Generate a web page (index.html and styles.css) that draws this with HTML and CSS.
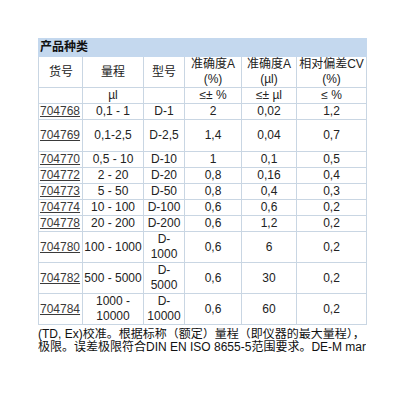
FILE: index.html
```html
<!DOCTYPE html>
<html lang="zh">
<head>
<meta charset="utf-8">
<link rel="stylesheet" href="styles.css">
</head>
<body>
<div class="page">
  <table class="spec">
    <colgroup>
      <col class="c1"><col class="c2"><col class="c3"><col class="c4"><col class="c5"><col class="c6">
    </colgroup>
    <tr class="title"><th colspan="6">产品种类</th></tr>
    <tr class="head">
      <td>货号</td><td>量程</td><td>型号</td><td>准确度A<br>(%)</td><td>准确度A<br>(µl)</td><td>相对偏差CV<br>(%)</td>
    </tr>
    <tr><td></td><td>µl</td><td></td><td>≤± %</td><td>≤± µl</td><td>≤ %</td></tr>
    <tr><td><a href="#">704768</a></td><td>0,1 - 1</td><td>D-1</td><td>2</td><td>0,02</td><td>1,2</td></tr>
    <tr class="tall"><td><a href="#">704769</a></td><td>0,1-2,5</td><td>D-2,5</td><td>1,4</td><td>0,04</td><td>0,7</td></tr>
    <tr><td><a href="#">704770</a></td><td>0,5 - 10</td><td>D-10</td><td>1</td><td>0,1</td><td>0,5</td></tr>
    <tr><td><a href="#">704772</a></td><td>2 - 20</td><td>D-20</td><td>0,8</td><td>0,16</td><td>0,4</td></tr>
    <tr><td><a href="#">704773</a></td><td>5 - 50</td><td>D-50</td><td>0,8</td><td>0,4</td><td>0,3</td></tr>
    <tr><td><a href="#">704774</a></td><td>10 - 100</td><td>D-100</td><td>0,6</td><td>0,6</td><td>0,2</td></tr>
    <tr><td><a href="#">704778</a></td><td>20 - 200</td><td>D-200</td><td>0,6</td><td>1,2</td><td>0,2</td></tr>
    <tr><td><a href="#">704780</a></td><td>100 - 1000</td><td>D-<br>1000</td><td>0,6</td><td>6</td><td>0,2</td></tr>
    <tr><td><a href="#">704782</a></td><td>500 - 5000</td><td>D-<br>5000</td><td>0,6</td><td>30</td><td>0,2</td></tr>
    <tr><td><a href="#">704784</a></td><td>1000 -<br>10000</td><td>D-<br>10000</td><td>0,6</td><td>60</td><td>0,2</td></tr>
  </table>
  <p class="note">(TD, Ex)校准。根据标称（额定）量程（即仪器的最大量程），<br>极限。误差极限符合DIN EN ISO 8655-5范围要求。DE-M marking</p>
</div>
</body>
</html>
```

FILE: styles.css
```css
html, body {
  margin: 0;
  padding: 0;
  background: #ffffff;
  overflow: hidden;
}

.page {
  padding: 38px 0 0 38px;
  font-family: "Liberation Sans", "Noto Sans CJK SC", sans-serif;
  font-size: 12px;
  color: #222222;
}

.spec {
  border-collapse: collapse;
  width: 328px;
  table-layout: fixed;
}

.c1 { width: 44px; }
.c2 { width: 61px; }
.c3 { width: 41px; }
.c4 { width: 57px; }
.c5 { width: 55px; }
.c6 { width: 70px; }

.spec td {
  border: 1px solid #c9d6e3;
  padding: 0;
  line-height: 15px;
  text-align: center;
  vertical-align: middle;
  white-space: nowrap;
}

.spec td:first-child {
  text-align: left;
  padding-left: 1px;
}

.spec .head td:first-child {
  text-align: center;
}

.spec a {
  color: #3a3a3a;
  text-decoration: underline;
}

.title th {
  background: #c4d8ee;
  text-align: left;
  font-weight: bold;
  color: #111111;
  padding: 0 0 0 1px;
  height: 17px;
  line-height: 17px;
  border: 1px solid #c4d8ee;
  font-size: 12px;
}

.tall td {
  height: 31px;
}

.note {
  margin: 3px 0 0 0;
  width: 328px;
  overflow: hidden;
  line-height: 13px;
  color: #111111;
  white-space: nowrap;
}
```
